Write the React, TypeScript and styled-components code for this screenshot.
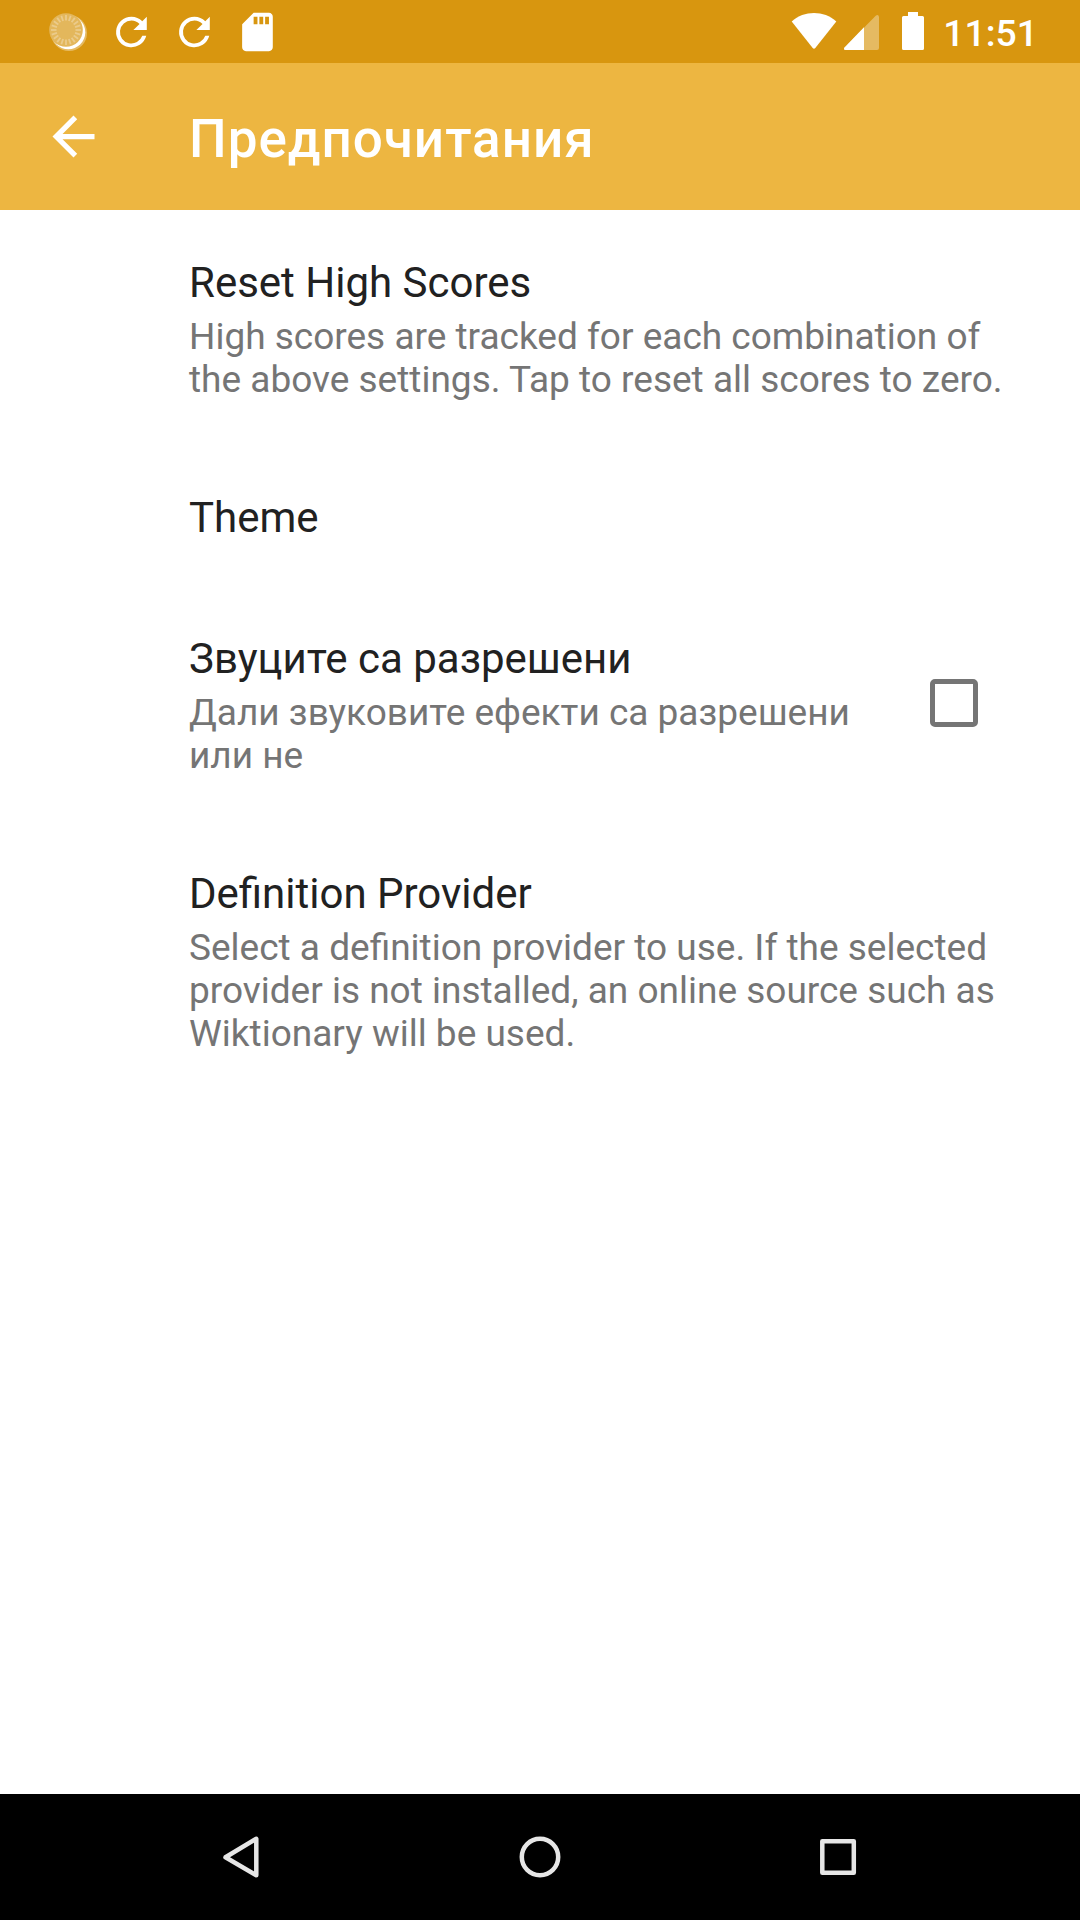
import React from "react";
import styled, { createGlobalStyle } from "styled-components";

const GlobalStyle = createGlobalStyle`
  body { margin: 0; background: #fff; font-family: Roboto, "Noto Sans", sans-serif; }
  svg { display: block; flex: none; }
`;

const Screen = styled.div`
  width: 1080px;
  height: 1920px;
  display: flex;
  flex-direction: column;
  background: #fff;
  overflow: hidden;
`;

const StatusBar = styled.header`
  height: 63px;
  flex: none;
  display: flex;
  align-items: center;
  justify-content: space-between;
  box-sizing: border-box;
  padding: 0 42px 0 42px;
  background: #d8960f;
`;

const Notifications = styled.div`
  display: flex;
  gap: 12px;
`;

const SystemIcons = styled.div`
  display: flex;
  align-items: center;
`;

const Clock = styled.time`
  font-size: 37.3px;
  font-weight: 500;
  line-height: 43px;
  color: #fff;
  padding: 3px 0 0 15.5px;
`;

const AppBar = styled.div`
  height: 147px;
  flex: none;
  display: flex;
  align-items: center;
  padding-left: 42px;
  background: #edb641;
`;

const BackButton = styled.button`
  width: 63px;
  height: 63px;
  margin-right: 84px;
  padding: 0;
  border: 0;
  background: none;
`;

const Title = styled.h1`
  margin: 0;
  padding-top: 5px;
  font-size: 53px;
  line-height: 62px;
  letter-spacing: 1px;
  font-weight: 500;
  color: #fff;
`;

const Preferences = styled.main`
  flex: 1;
`;

const Preference = styled.section`
  display: flex;
  align-items: center;
  padding: 48px 42px 44px 189px;
`;

const PreferenceText = styled.div`
  flex: 1;
`;

const PreferenceTitle = styled.h2`
  margin: 0;
  font-size: 42px;
  line-height: 49px;
  font-weight: 400;
  color: #212121;
`;

const Summary = styled.p`
  margin: 8px 0 0;
  font-size: 37px;
  line-height: 43px;
  color: #757575;
  white-space: pre;
`;

const Checkbox = styled.span`
  box-sizing: border-box;
  width: 48px;
  height: 48px;
  margin: 0 60px 6px 0;
  border: 5px solid #757575;
  border-radius: 5px;
`;

const NavBar = styled.nav`
  height: 126px;
  flex: none;
  display: flex;
  align-items: center;
  justify-content: center;
  gap: 228px;
  background: #000;
`;

const ticks = Array.from({ length: 20 }, (_, i) => i * 18);

const SyncIcon = () => (
  <svg width="51" height="46" viewBox="42 8 51 46">
    <circle cx="69" cy="32" r="18" fill="#fff" fillOpacity="0.35" />
    <circle cx="68.3" cy="31.3" r="17" fill="#fff" />
    <circle cx="66" cy="29" r="16.8" fill="#e3b75c" />
    {ticks.map((a) => (
      <path key={a} d="M66 14v5.5" stroke="#ebcb8b" strokeWidth="1.8" transform={`rotate(${a} 66 29)`} />
    ))}
  </svg>
);

const RefreshIcon = () => (
  <svg width="51" height="46" viewBox="-1.8 0 26.6 24" fill="#fff">
    <path d="M17.65 6.35A7.96 7.96 0 0 0 12 4a8 8 0 1 0 7.73 10h-2.08A6 6 0 1 1 12 6c1.66 0 3.14.69 4.22 1.78L13 11h7V4z" />
  </svg>
);

const SdCardIcon = () => (
  <svg width="51" height="46" viewBox="-1.8 0 26.6 24" fill="#fff">
    <path d="M18 2h-8L4.02 8 4 20c0 1.1.9 2 2 2h12c1.1 0 2-.9 2-2V4c0-1.1-.9-2-2-2m-6 6h-2V4h2zm3 0h-2V4h2zm3 0h-2V4h2z" />
  </svg>
);

const settings = [
  {
    title: "Reset High Scores",
    summary: "High scores are tracked for each combination of\nthe above settings. Tap to reset all scores to zero.",
  },
  { title: "Theme" },
  { title: "Звуците са разрешени", summary: "Дали звуковите ефекти са разрешени\nили не", checkbox: true },
  {
    title: "Definition Provider",
    summary:
      "Select a definition provider to use. If the selected\nprovider is not installed, an online source such as\nWiktionary will be used.",
  },
];

export default function App() {
  return (
    <Screen>
      <GlobalStyle />
      <StatusBar>
        <Notifications>
          <SyncIcon />
          <RefreshIcon />
          <RefreshIcon />
          <SdCardIcon />
        </Notifications>
        <SystemIcons>
          <svg width="138" height="63" viewBox="790 0 138 63" fill="#fff">
            <path d="M791.7 21.5C804 10.3 824 10.3 836.3 21.5L815.3 48q-1.3 1.5-2.6 0z" />
            <path d="M879 17v31q0 2-2 2h-31.5q-2.5-.5-1-2.5L876 15.5q2.5-1.5 3 1.5z" fillOpacity="0.35" />
            <path d="M864 27.3V50h-18.5q-2.5-.5-1-2.5z" />
            <path d="M908 12h10v4h4.5q1.5 0 1.5 1.5v31q0 1.5-1.5 1.5h-19q-1.5 0-1.5-1.5v-31q0-1.5 1.5-1.5h4.5z" />
          </svg>
          <Clock>11:51</Clock>
        </SystemIcons>
      </StatusBar>
      <AppBar>
        <BackButton aria-label="Back">
          <svg width="63" height="63" viewBox="0 0 24 24" fill="#fff">
            <path d="M20 11H7.83l5.59-5.59L12 4l-8 8 8 8 1.41-1.41L7.83 13H20z" />
          </svg>
        </BackButton>
        <Title>Предпочитания</Title>
      </AppBar>
      <Preferences>
        {settings.map((s) => (
          <Preference key={s.title}>
            <PreferenceText>
              <PreferenceTitle>{s.title}</PreferenceTitle>
              {s.summary && <Summary>{s.summary}</Summary>}
            </PreferenceText>
            {s.checkbox && <Checkbox role="checkbox" aria-checked={false} />}
          </Preference>
        ))}
      </Preferences>
      <NavBar>
        <svg width="70" height="70" viewBox="207 1822 70 70" fill="none" stroke="#e6e6e6" strokeWidth="4.5" strokeLinejoin="round">
          <path d="M225.5 1857.3L256.3 1838.8V1875.3z" />
        </svg>
        <svg width="70" height="70" viewBox="505 1822 70 70" fill="none" stroke="#e6e6e6" strokeWidth="4.5">
          <circle cx="540" cy="1857" r="18.2" />
        </svg>
        <svg width="70" height="70" viewBox="803 1822 70 70" fill="none" stroke="#e6e6e6" strokeWidth="4.5" strokeLinejoin="round">
          <path d="M822.3 1841.3h31.5v31.5h-31.5z" />
        </svg>
      </NavBar>
    </Screen>
  );
}
